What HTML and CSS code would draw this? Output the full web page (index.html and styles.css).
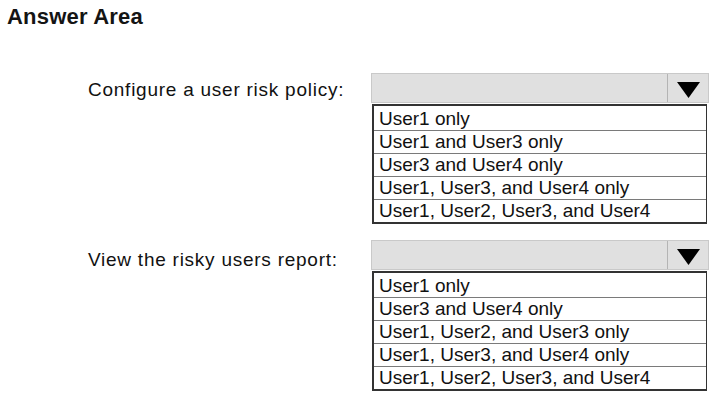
FILE: index.html
```html
<!DOCTYPE html>
<html lang="en">
<head>
<meta charset="utf-8">
<title>Answer Area</title>
<link rel="stylesheet" href="styles.css">
</head>
<body>
<div class="page">
  <h1 class="title">Answer Area</h1>

  <div class="section">
    <div class="label">Configure a user risk policy:</div>
    <div class="dropdown">
      <div class="dd-head">
        <div class="dd-field"></div>
        <div class="dd-btn">
          <svg width="23" height="16" viewBox="0 0 23 16"><polygon points="0,0 23,0 11.5,16" fill="#000"/></svg>
        </div>
      </div>
      <div class="dd-list">
        <div class="dd-item">User1 only</div>
        <div class="dd-item">User1 and User3 only</div>
        <div class="dd-item">User3 and User4 only</div>
        <div class="dd-item">User1, User3, and User4 only</div>
        <div class="dd-item">User1, User2, User3, and User4</div>
      </div>
    </div>
  </div>

  <div class="section">
    <div class="label label-low">View the risky users report:</div>
    <div class="dropdown">
      <div class="dd-head">
        <div class="dd-field"></div>
        <div class="dd-btn">
          <svg width="23" height="16" viewBox="0 0 23 16"><polygon points="0,0 23,0 11.5,16" fill="#000"/></svg>
        </div>
      </div>
      <div class="dd-list">
        <div class="dd-item">User1 only</div>
        <div class="dd-item">User3 and User4 only</div>
        <div class="dd-item">User1, User2, and User3 only</div>
        <div class="dd-item">User1, User3, and User4 only</div>
        <div class="dd-item">User1, User2, User3, and User4</div>
      </div>
    </div>
  </div>
</div>
</body>
</html>
```
FILE: styles.css
```css
html, body {
  margin: 0;
  padding: 0;
  background: #ffffff;
}

body {
  font-family: "Liberation Sans", Arial, sans-serif;
  color: #111111;
}

.page {
  width: 719px;
  height: 404px;
  overflow: hidden;
}

.title {
  margin: 0 0 0 7px;
  padding-top: 4px;
  font-size: 22px;
  line-height: 26px;
  font-weight: 700;
  letter-spacing: 0.2px;
  color: #141414;
}

.section {
  display: grid;
  grid-template-columns: 284px 338px;
  margin-left: 88px;
  margin-top: 16px;
}

.title + .section {
  margin-top: 43px;
}

.label {
  font-size: 19px;
  line-height: 22px;
  letter-spacing: 0.75px;
  padding-top: 6px;
  white-space: nowrap;
}

.label-low {
  padding-top: 9px;
}

.dropdown {
  display: flex;
  flex-direction: column;
}

.dd-head {
  display: flex;
  box-sizing: border-box;
  width: 338px;
  height: 30px;
  margin-left: -1px;
  border: 1px solid #c9c9c9;
  background: #e0e0e0;
}

.dd-field {
  flex: 1;
}

.dd-btn {
  width: 41px;
  border-left: 1px solid #b4b4b4;
  display: flex;
  justify-content: center;
  padding-top: 8px;
  box-sizing: border-box;
}

.dd-list {
  box-sizing: border-box;
  width: 335px;
  margin-top: 1px;
  border: 2px solid #333333;
  border-right-width: 1.5px;
  background: #ffffff;
}

.dd-item {
  font-size: 19px;
  line-height: 22px;
  padding-left: 5px;
  border-top: 1px solid #7a7a7a;
  white-space: nowrap;
  color: #111111;
}

.dd-item:first-child {
  border-top: none;
  padding-top: 2px;
}
```
